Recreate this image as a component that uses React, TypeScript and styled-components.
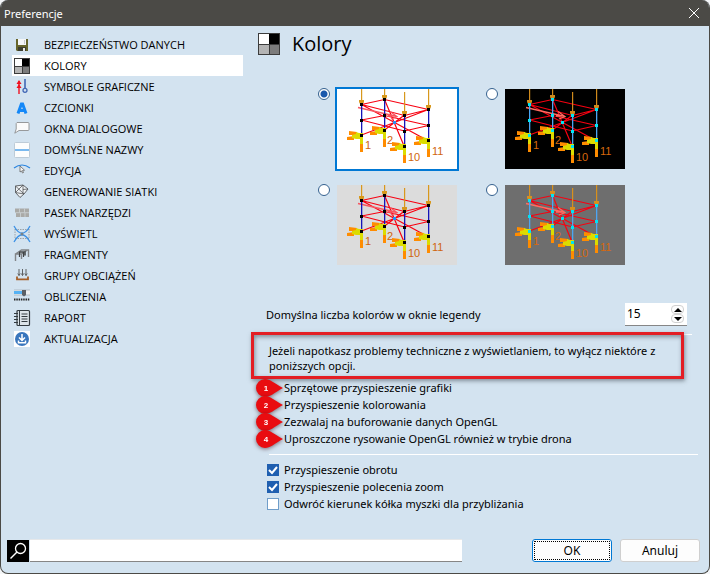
import React, { useState } from "react";
import styled, { createGlobalStyle, css } from "styled-components";

const GlobalStyle = createGlobalStyle`
  *, *::before, *::after { box-sizing: border-box; }
  body { margin: 0; background: #f4f6f8; }
  body, button, input {
    font-family: "Noto Sans", "Open Sans", sans-serif;
    font-size: 11px;
    line-height: 17px;
    color: #000;
  }
`;

const Dialog = styled.div`
  display: flex;
  flex-direction: column;
  min-height: 100vh;
  overflow: hidden;
  border: 1px solid #4b4a46;
  border-top: 0;
  border-radius: 8px;
  background: #d3e3f0;
`;

const TitleBar = styled.header`
  display: flex;
  align-items: center;
  justify-content: space-between;
  height: 26px;
  padding: 0 9px 0 3px;
  background: #4b4a46;
  color: #fff;
`;

const CloseButton = styled.button`
  display: flex;
  padding: 0;
  border: 0;
  background: none;
  color: #fff;
`;

const Columns = styled.div`
  display: flex;
  flex: 1;
`;

const Sidebar = styled.nav`
  flex: 0 0 242px;
  padding: 8px 0 0 11px;
`;

const NavButton = styled.button<{ $selected: boolean }>`
  display: flex;
  align-items: center;
  gap: 14px;
  width: 100%;
  height: 21px;
  padding: 0 2px;
  border: 0;
  background: ${(p) => (p.$selected ? "#fff" : "transparent")};
  font-family: "Open Sans", "Noto Sans", sans-serif;
  text-align: left;
  white-space: nowrap;
`;

const Content = styled.main`
  flex: 1;
  padding: 6px 17px 0 15px;
`;

const Heading = styled.h1`
  display: flex;
  align-items: center;
  gap: 12px;
  height: 24px;
  margin: 0;
  font-family: "Open Sans", "Noto Sans", sans-serif;
  font-size: 20px;
  font-weight: 400;
  line-height: 24px;
`;

const Schemes = styled.div`
  display: grid;
  grid-template-columns: max-content max-content;
  gap: 16px 29px;
  margin: 33px 0 0 60px;
`;

const Scheme = styled.label`
  display: flex;
  align-items: flex-start;
  gap: 7px;
`;

const Radio = styled.input`
  appearance: none;
  width: 12px;
  height: 12px;
  margin: -1px 0 0;
  border: 1px solid #35618f;
  border-radius: 50%;
  background: #fff;
  &:checked {
    background: radial-gradient(circle, #1a58ac 3px, #fff 4px);
  }
`;

const Preview = styled.svg<{ $selected: boolean }>`
  display: block;
  width: 120px;
  height: 80px;
  ${(p) =>
    p.$selected &&
    css`
      outline: 2px solid #0078d4;
    `}
`;

const CountRow = styled.div`
  display: flex;
  align-items: center;
  justify-content: space-between;
  margin: 38px 5px 0 8px;
`;

const Spinner = styled.div`
  display: flex;
  align-items: center;
  width: 62px;
  height: 23px;
  padding-right: 3px;
  border-bottom: 1px solid #868686;
  background: #fff;
`;

const NumberInput = styled.input`
  appearance: textfield;
  flex: 1;
  min-width: 0;
  padding: 0 0 2px 2px;
  border: 0;
  outline: 0;
  background: none;
  font-size: 12px;
  &::-webkit-inner-spin-button { display: none; }
`;

const SpinButtons = styled.div`
  display: flex;
  flex-direction: column;
`;

const SpinButton = styled.button`
  display: flex;
  align-items: center;
  justify-content: center;
  width: 13px;
  height: 9px;
  padding: 0;
  border: 1px solid #d0d0d0;
  border-radius: 4px;
  background: #fdfdfd;
`;

const Notice = styled.section`
  position: relative;
  margin: 8px 0 0 10px;
  padding-bottom: 2px;
`;

const Rule = styled.hr`
  height: 1px;
  margin: 0;
  border: 0;
  background: #fff;
`;

const WideRule = styled(Rule)`
  margin: 0 -6px 0 11px;
`;

const NoticeText = styled.p`
  max-width: 402px;
  margin: 8px 0 0 1px;
  line-height: 15px;
`;

const Highlight = styled.div`
  position: absolute;
  inset: -2px 8px -4px -17px;
  border: 3px solid #e31e24;
  box-shadow: 1px 2px 4px rgba(50, 60, 70, 0.5), inset 1px 2px 4px rgba(50, 60, 70, 0.5);
  pointer-events: none;
`;

const Options = styled.ol`
  display: flex;
  flex-direction: column;
  margin: 4px 0 7px;
  padding: 0;
  list-style: none;
`;

const Option = styled.li`
  display: flex;
  align-items: center;
  height: 17px;
  gap: 1px;
  white-space: nowrap;
`;

const Pin = styled.svg`
  display: block;
  flex: none;
  width: 28px;
  height: 18px;
  margin-left: -3px;
  overflow: visible;
  filter: drop-shadow(0 1px 2px rgba(60, 20, 30, 0.6));
`;

const Checks = styled.div`
  display: flex;
  flex-direction: column;
  padding: 6px 0 0 9px;
`;

const CheckLabel = styled.label`
  display: flex;
  align-items: center;
  gap: 5px;
  height: 17px;
  white-space: nowrap;
`;

const CheckBox = styled.input`
  appearance: none;
  width: 12px;
  height: 12px;
  margin: 0;
  border: 1px solid #6f9dc9;
  background: #fff;
  &:checked {
    border-color: #1f5fb0;
    background: #1f5fb0
      url("data:image/svg+xml,%3Csvg xmlns='http://www.w3.org/2000/svg' viewBox='0 0 10 10'%3E%3Cpath d='M1 5l3 3 5-6' fill='none' stroke='white' stroke-width='2'/%3E%3C/svg%3E");
  }
`;

const Footer = styled.footer`
  display: flex;
  align-items: center;
  padding: 0 9px 11px 6px;
`;

const SearchIcon = styled.svg`
  flex: none;
  width: 22px;
  height: 22px;
  margin-right: 1px;
`;

const SearchInput = styled.input`
  flex: 1;
  min-width: 0;
  height: 23px;
  margin-right: 70px;
  padding: 0 4px;
  border: 0;
  border-top: 1px solid #e6e8ea;
  border-bottom: 1px solid #868686;
  outline: 0;
  background: #fff;
`;

const Button = styled.button<{ $primary?: boolean }>`
  width: 80px;
  height: 23px;
  padding: 0;
  border: 1px solid ${(p) => (p.$primary ? "#0078d4" : "#cfcfcf")};
  border-radius: 3px;
  background: #fdfdfd;
  font-size: 12px;
  ${(p) =>
    p.$primary &&
    css`
      margin-right: 8px;
      outline: 1px dotted #000;
      outline-offset: -3px;
    `}
`;

const Icon = styled.svg`
  flex: none;
  display: block;
  overflow: visible;
`;

const ColorSquares = ({ size }: { size: number }) => (
  <Icon width={size} height={size} viewBox={`0 0 ${size} ${size}`} shapeRendering="crispEdges">
    <rect width={size} height={size} fill="#3c3c3c" />
    <rect x="1" y="1" width={size / 2 - 1} height={size / 2 - 1} fill="#fff" />
    <rect x={size / 2} y="1" width={size / 2 - 1} height={size / 2 - 1} fill="#000" />
    <rect x="1" y={size / 2 + 1} width={size / 2 - 1} height={size / 2 - 2} fill="#b4b4b4" />
    <rect x={size / 2 + 1} y={size / 2 + 1} width={size / 2 - 2} height={size / 2 - 2} fill="#7c7c7c" />
  </Icon>
);

const icons: Record<string, React.ReactNode> = {
  save: (
    <>
      <path fill="#66652c" d="M2 2h12v12H3l-1-1z" />
      <path fill="#f4f6f8" d="M4 2h8v6H4z" />
      <path fill="#c5c7cb" d="M10 3h1v4h-1z" />
      <path fill="#3d3e30" d="M4 10h8v4H4z" />
      <path fill="#e8e8e8" d="M9 11h2v3H9z" />
    </>
  ),
  symbols: (
    <>
      <path fill="none" stroke="#f01020" strokeWidth="1.4" d="M5 2v13" />
      <path fill="#f01020" d="M5 1l2.5 4h-5zM5 5l2.5 4h-5z" />
      <path fill="none" stroke="#4267b5" strokeWidth="1.6" d="M11 0v9" />
      <circle cx="11" cy="11.3" r="2" fill="#d3e3f0" stroke="#4267b5" strokeWidth="1.3" />
    </>
  ),
  font: <path fill="none" stroke="#1488f8" strokeWidth="3" d="M4 13.500L7.400 4h1.200l3.400 9.500M5 10.500h6" />,
  bubble: <path fill="#fbfbfb" stroke="#8d8f91" strokeWidth=".9" d="M3 1.500h11q1 0 1 1v6q0 1-1 1H5L.8 12.200 2.200 8V2.500z" />,
  names: (
    <>
      <rect x=".5" y=".5" width="15" height="15" rx="1" fill="#fcfdfd" stroke="#bdcbd7" />
      <path stroke="#7ab9ef" strokeWidth="2" d="M1 8h14" />
    </>
  ),
  edit: (
    <>
      <path fill="none" stroke="#2b85df" strokeWidth="1.2" d="M0 5Q8-1 16 5" />
      <path fill="#f5f5f5" stroke="#666" strokeWidth=".8" d="M6 3l4.500 4.200-2 .3 1 2-1 .5-1-2-1.500 1z" />
    </>
  ),
  mesh: (
    <>
      <path fill="#edf1f4" stroke="#55585b" strokeWidth=".9" d="M1.500 2L9 1l5 4-4 5-4 3.500-4.500-5z" />
      <path fill="none" stroke="#55585b" strokeWidth=".8" d="M1.500 2L10 10M9 1L1.500 8.500 10 10M9 1v9M9 5.500L14 5" />
    </>
  ),
  toolbar: (
    <>
      <path fill="#aaaaa7" d="M1 3.500h14V8H1zM2 8h13v4H2z" />
      <path fill="none" stroke="#cdd3d6" strokeWidth=".8" d="M1 7.700h14M5.500 3.500v4M10.500 3.500v4M6.500 8v4M11 8v4" />
    </>
  ),
  view: (
    <>
      <path fill="none" stroke="#8d9296" strokeWidth=".8" strokeDasharray="1.500 1" d="M1 3.500h14M1 12.500h14M1 3v10M15 3v10" />
      <path fill="none" stroke="#3c91e6" strokeWidth="1.3" d="M0 0Q8 14.500 16 0M0 16Q8 1.500 16 16" />
      <circle cx="8" cy="8" r="1.500" fill="#75828b" />
    </>
  ),
  fragments: (
    <>
      <path fill="none" stroke="#818487" strokeWidth="1.4" d="M1.500 14V7h6v5M1.500 7l6-4h7v7M7.500 7l6-4M5 5h6v4" />
      <path fill="none" stroke="#3f4244" strokeWidth="1.2" d="M5.500 10V5h4v5M11 8V4" />
    </>
  ),
  loads: (
    <>
      <path fill="none" stroke="#5f6265" d="M5 1v6.500M8.500 1v6.500M12 1v6.500M3.800 5.500L5 7.500l1.200-2M7.300 5.500l1.200 2 1.200-2M10.800 5.500l1.200 2 1.200-2" />
      <path fill="none" stroke="#a65f28" strokeWidth="1.8" d="M3 8.500v2.800h11V8.500" />
    </>
  ),
  calc: (
    <>
      <path fill="#edf0f2" d="M0 1h16v5H0z" />
      <path stroke="#aab4bc" strokeWidth=".8" d="M0 1h16M0 6h16" />
      <path fill="#56b2f4" d="M0 2h8v3H0z" />
      <path fill="#5b5f64" d="M8 1h4v5l-2 1.500L8 6z" />
      <path stroke="#292929" strokeWidth="2" strokeDasharray="1.500 .8" d="M0 10.500h16" />
    </>
  ),
  report: (
    <>
      <rect x="3" y=".5" width="12.500" height="15" rx="1" fill="#dce4e9" stroke="#333b40" strokeWidth="1.2" />
      <path fill="none" stroke="#333b40" d="M5.500 1v14M7.500 4h6M7.500 6.500h6M7.500 9h6M7.500 11.500h6M0 3.500h4M0 6.500h4M0 9.500h4M0 12.500h4" />
    </>
  ),
  update: (
    <>
      <path fill="#fff" d="M0 0h16v16H0z" />
      <circle cx="8" cy="8" r="7" fill="#3976bd" />
      <path fill="none" stroke="#fff" strokeWidth="1.500" d="M8 3v6M5 6.500l3 3 3-3M4.500 9.500v2.300h7V9.500" />
    </>
  ),
};

const sections = [
  { icon: "save", label: "BEZPIECZEŃSTWO DANYCH" },
  { icon: "colors", label: "KOLORY" },
  { icon: "symbols", label: "SYMBOLE GRAFICZNE" },
  { icon: "font", label: "CZCIONKI" },
  { icon: "bubble", label: "OKNA DIALOGOWE" },
  { icon: "names", label: "DOMYŚLNE NAZWY" },
  { icon: "edit", label: "EDYCJA" },
  { icon: "mesh", label: "GENEROWANIE SIATKI" },
  { icon: "toolbar", label: "PASEK NARZĘDZI" },
  { icon: "view", label: "WYŚWIETL" },
  { icon: "fragments", label: "FRAGMENTY" },
  { icon: "loads", label: "GRUPY OBCIĄŻEŃ" },
  { icon: "calc", label: "OBLICZENIA" },
  { icon: "report", label: "RAPORT" },
  { icon: "update", label: "AKTUALIZACJA" },
];

interface Palette {
  name: string;
  back: string;
  column: string;
  node: string;
  center: string;
  load: string;
  force: string;
  text: string;
}

const schemes: Palette[] = [
  { name: "Białe tło", back: "#fff", column: "#1414b8", node: "#000", center: "#2f8df0", load: "#d8981c", force: "#f8555f", text: "#d0650c" },
  { name: "Czarne tło", back: "#000", column: "#4ca6f4", node: "#00e4f4", center: "#00e4f4", load: "#d08a1c", force: "#ff6a60", text: "#d8680c" },
  { name: "Jasnoszare tło", back: "#dcdcdc", column: "#1414b8", node: "#000", center: "#1e90f8", load: "#d8981c", force: "#f8555f", text: "#d0650c" },
  { name: "Ciemnoszare tło", back: "#6e6e6e", column: "#4ca6f4", node: "#00e4f4", center: "#00e4f4", load: "#d8901c", force: "#ff6a60", text: "#d8680c" },
];

const posts = [
  { x: 24, top: 15, loadTop: 0, tag: "1", tx: 28, ty: 60 },
  { x: 47, top: 10, loadTop: 0, tag: "2", tx: 50, ty: 55 },
  { x: 67, top: 26, loadTop: 3, tag: "10", tx: 71, ty: 72 },
  { x: 91, top: 20, loadTop: 0, tag: "11", tx: 95, ty: 66 },
];

const Scene = ({ p, selected }: { p: Palette; selected: boolean }) => (
  <Preview $selected={selected} viewBox="0 0 120 80">
    <rect width="120" height="80" fill={p.back} />
    <path
      fill="none"
      stroke="#f80010"
      strokeWidth="1.2"
      d="M24.500 15.500L47.500 10.500 91.500 20.500 67.500 26.500zM24.500 31L47.500 26.500 91.500 36.500 67.500 42zM24.500 15.500L91.500 52M47.500 10.500L67.500 58M91.500 20.500L24.500 46M67.500 26L47.500 41"
    />
    <path fill="none" stroke={p.force} strokeWidth="1.3" d="M21 18.500L60 27.500M53 22.500l7 5-6 2.500M51 27h6" />
    {posts.map((s) => (
      <g key={s.tag}>
        <rect x={s.x} y={s.top} width="1.300" height="32" fill={p.column} />
        <rect x={s.x} y={s.loadTop} width="1.200" height={s.top - s.loadTop} fill={p.load} />
        <path fill={p.load} d={`M${s.x - 2} ${s.top - 4}h5v2l-1 2h-3l-1-2z`} />
        <g transform={`translate(${s.x} ${s.top + 31})`}>
          <path fill="#ff8c00" d="M-12-4l8 1v3h-8zM-14 2l7-1v4h-7zM-1 9h3v8h-3z" />
          <path fill="#dcdc00" d="M-5-3l3 1h4V9h-3V4h-4l-4-1V0l4-1z" />
        </g>
        <path fill={p.node} d={`M${s.x - 1} ${s.top - 1}h3v3h-3zM${s.x - 1} ${s.top + 15}h3v3h-3zM${s.x - 1} ${s.top + 30}h3v3h-3z`} />
        <text x={s.tx} y={s.ty} fill={p.text} fontFamily="Liberation Sans, sans-serif" fontSize="11">
          {s.tag}
        </text>
      </g>
    ))}
    <path fill={p.center} d="M56 32h3v3h-3z" />
  </Preview>
);

const NumberPin = ({ n }: { n: number }) => (
  <Pin viewBox="0 0 28 18">
    <path d="M10 0a9 9 0 1 0 0 18c5 0 9-4 18-9C19 4 15 0 10 0z" fill="#e90c10" />
    <text x="11" y="12" fill="#fff" fontFamily="Liberation Sans, sans-serif" fontSize="8" fontWeight="700" textAnchor="middle">
      {n}
    </text>
  </Pin>
);

const renderingOptions = [
  "Sprzętowe przyspieszenie grafiki",
  "Przyspieszenie kolorowania",
  "Zezwalaj na buforowanie danych OpenGL",
  "Uproszczone rysowanie OpenGL również w trybie drona",
];

const navigationOptions = [
  { label: "Przyspieszenie obrotu", on: true },
  { label: "Przyspieszenie polecenia zoom", on: true },
  { label: "Odwróć kierunek kółka myszki dla przybliżania", on: false },
];

export default function App() {
  const [section, setSection] = useState("KOLORY");
  const [scheme, setScheme] = useState(0);
  const [count, setCount] = useState(15);

  return (
    <>
      <GlobalStyle />
      <Dialog role="dialog" aria-labelledby="dialog-title">
        <TitleBar>
          <span id="dialog-title">Preferencje</span>
          <CloseButton aria-label="Zamknij">
            <svg width="12" height="12" viewBox="0 0 12 12">
              <path stroke="currentColor" d="M1 1l10 10M11 1L1 11" />
            </svg>
          </CloseButton>
        </TitleBar>
        <Columns>
          <Sidebar>
            {sections.map((s) => (
              <NavButton key={s.label} $selected={s.label === section} onClick={() => setSection(s.label)}>
                {s.icon === "colors" ? (
                  <ColorSquares size={16} />
                ) : (
                  <Icon width="16" height="16" viewBox="0 0 16 16">
                    {icons[s.icon]}
                  </Icon>
                )}
                {s.label}
              </NavButton>
            ))}
          </Sidebar>
          <Content>
            <Heading>
              <ColorSquares size={22} />
              Kolory
            </Heading>
            <Schemes role="radiogroup" aria-label="Kolory">
              {schemes.map((p, i) => (
                <Scheme key={p.name}>
                  <Radio type="radio" name="scheme" aria-label={p.name} checked={scheme === i} onChange={() => setScheme(i)} />
                  <Scene p={p} selected={scheme === i} />
                </Scheme>
              ))}
            </Schemes>
            <CountRow>
              <label htmlFor="color-count">Domyślna liczba kolorów w oknie legendy</label>
              <Spinner>
                <NumberInput id="color-count" type="number" value={count} onChange={(e) => setCount(Number(e.target.value))} />
                <SpinButtons>
                  <SpinButton aria-label="Więcej" onClick={() => setCount(count + 1)}>
                    <svg width="8" height="4" viewBox="0 0 8 4"><path d="M0 4h8L4 0z" /></svg>
                  </SpinButton>
                  <SpinButton aria-label="Mniej" onClick={() => setCount(count - 1)}>
                    <svg width="8" height="4" viewBox="0 0 8 4"><path d="M0 0h8L4 4z" /></svg>
                  </SpinButton>
                </SpinButtons>
              </Spinner>
            </CountRow>
            <Notice>
              <Rule />
              <NoticeText>
                Jeżeli napotkasz problemy techniczne z wyświetlaniem, to wyłącz niektóre z poniższych opcji.
              </NoticeText>
              <Highlight />
            </Notice>
            <Options>
              {renderingOptions.map((text, i) => (
                <Option key={text}>
                  <NumberPin n={i + 1} />
                  {text}
                </Option>
              ))}
            </Options>
            <WideRule />
            <Checks>
              {navigationOptions.map((o) => (
                <CheckLabel key={o.label}>
                  <CheckBox type="checkbox" defaultChecked={o.on} />
                  {o.label}
                </CheckLabel>
              ))}
            </Checks>
          </Content>
        </Columns>
        <Footer>
          <SearchIcon viewBox="0 0 22 22">
            <path fill="#000" d="M0 0h22v22H0z" />
            <circle cx="13.500" cy="8.500" r="5" fill="none" stroke="#fff" strokeWidth="1.3" />
            <path stroke="#fff" strokeWidth="1.500" d="M10 12l-6.500 6.500" />
          </SearchIcon>
          <SearchInput type="search" aria-label="Szukaj" />
          <Button $primary>OK</Button>
          <Button>Anuluj</Button>
        </Footer>
      </Dialog>
    </>
  );
}
